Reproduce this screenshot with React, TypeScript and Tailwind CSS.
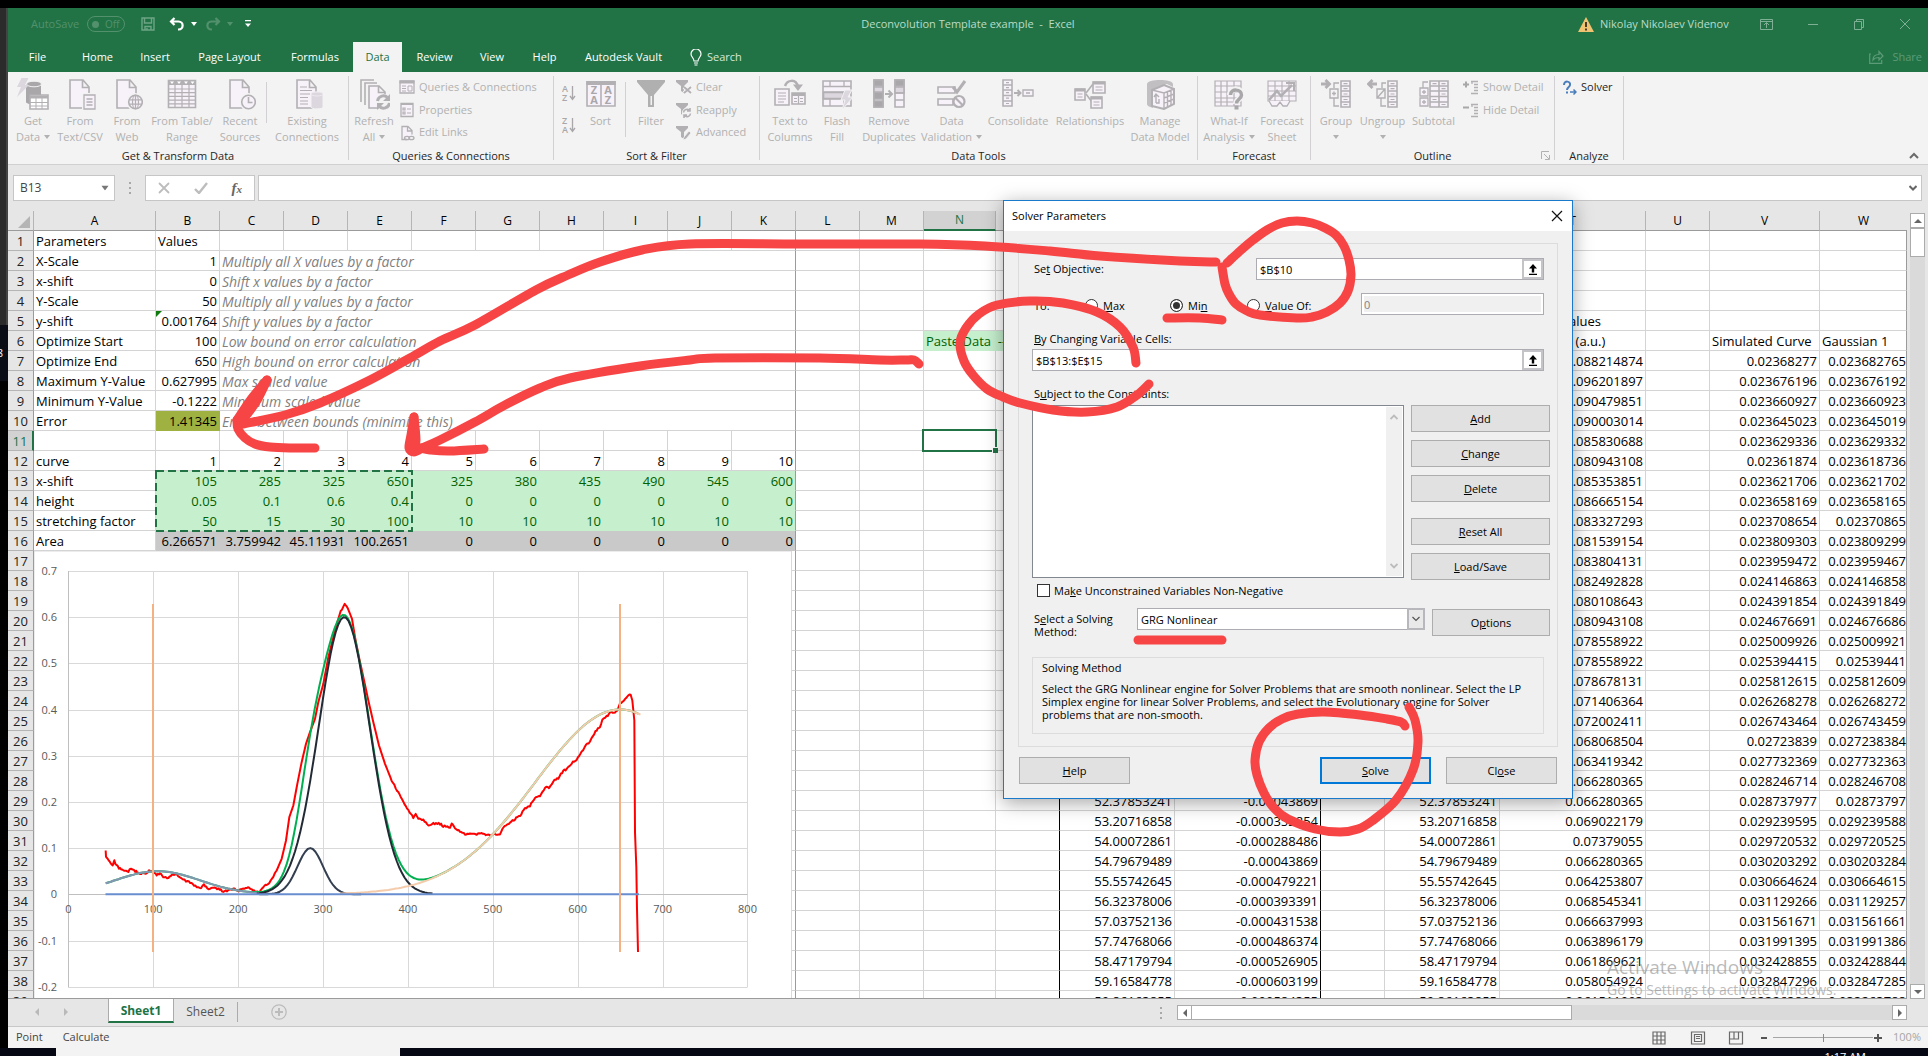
import React from "react";

type Pt = [number, number];
type Kids = { children?: React.ReactNode };

/* ---------- Ribbon icons ---------- */

const G = "#b3b0b4";
const D = "#a9a7a9";
const F = "#f7f1f9";
const P = "#dcd6de";

function Ico({ children }: Kids) {
  return (
    <svg viewBox="0 0 32 32" className="block size-8 shrink-0" fill="none" stroke={G} strokeWidth={1.6}>
      {children}
    </svg>
  );
}
const Page = () => <path d="M6 2h13l6 7v21H6zM18.500 2v7.500h6.500" fill={F} />;

const GetDataIcon = () => (
  <Ico>
    <path d="M9 6v18c0 3 15 3 15 0V6" fill={D} stroke="none" />
    <ellipse cx="17" cy="6" rx="7.500" ry="2.800" fill={D} stroke="#f3f3f3" strokeWidth={1} />
    <path d="M5 -1h7L8 7h4L0 19l4-10H0z" fill={P} stroke="none" />
    <path d="M13 17h18v14H13z" fill="#fff" />
    <path d="M13 19h18" strokeWidth={3} />
    <path d="M13 24.500h18M13 28h18M19 19v12M25 19v12" strokeWidth={1} />
  </Ico>
);
const TextCsvIcon = () => (
  <Ico>
    <Page />
    <path d="M20 17h11v14H20z" fill={F} stroke="#f3f3f3" strokeWidth={4} />
    <path d="M20 17h11v14H20zM22.500 21h6M22.500 24h6M22.500 27h6" fill={F} strokeWidth={1.300} />
  </Ico>
);
const WebIcon = () => (
  <Ico>
    <Page />
    <circle cx="24.500" cy="24" r="7" fill={F} stroke="#f3f3f3" strokeWidth={4} />
    <circle cx="24.500" cy="24" r="6.800" fill={F} />
    <ellipse cx="24.500" cy="24" rx="3" ry="6.800" strokeWidth={1.200} />
    <path d="M18 21.800h13M18 26.200h13M24.500 17v14" strokeWidth={1.200} />
  </Ico>
);
const TableIcon = () => (
  <Ico>
    <path d="M2.500 2.500h27v27h-27z" fill={F} />
    <path d="M2 4.500h28" strokeWidth={5} />
    <path d="M4 3.500h4l-2 2.500zM11 3.500h4l-2 2.500zM18 3.500h4l-2 2.500zM24.500 3.500h4l-2 2.500z" fill="#fff" stroke="none" />
    <path d="M2 11h28M2 14.700h28M2 18.400h28M2 22.100h28M2 25.800h28M9 7v23M16 7v23M23 7v23" strokeWidth={1.200} />
  </Ico>
);
const RecentIcon = () => (
  <Ico>
    <Page />
    <circle cx="24.500" cy="24" r="7" fill={F} stroke="#f3f3f3" strokeWidth={4} />
    <circle cx="24.500" cy="24" r="6.800" fill={F} />
    <path d="M24.500 19v5.500h4" />
  </Ico>
);
const ExistingIcon = () => (
  <Ico>
    <Page />
    <path d="M9 9h7M9 12.500h12M9 16h10M9 19.500h8M9 23h8M9 26h8" strokeWidth={1.200} />
    <path d="M20 16v13c0 2.500 12 2.500 12 0V16c0-2.500-12-2.500-12 0" fill={P} stroke="#f3f3f3" strokeWidth={1} />
    <ellipse cx="26" cy="16" rx="6" ry="2" fill={P} stroke="#efeaf0" strokeWidth={1} />
  </Ico>
);
const RefreshIcon = () => (
  <Ico>
    <path d="M3 24V2h13M7 27V5h12" />
    <path d="M11 8h10l6 6v16H11zM20.500 8v6.500H27" fill={F} />
    <circle cx="25.500" cy="24" r="8" fill="#f3f3f3" stroke="none" />
    <path d="M19.500 23a6 6 0 0 1 10.500-3M31.500 25a6 6 0 0 1-10.500 3" strokeWidth={3} />
    <path d="M32 16v7h-7zM19 32v-7h7z" fill={G} stroke="none" />
  </Ico>
);
const SortIcon = () => (
  <Ico>
    <path d="M2 4h28v24H2z" fill={F} />
    <path d="M1.200 5h29.600" strokeWidth={4} />
    <path d="M16 6v22" />
    <g fill={D} stroke="none" fontFamily="Open Sans" fontSize="11" fontWeight="700" textAnchor="middle">
      <text x="9" y="16">Z</text>
      <text x="9" y="26">A</text>
      <text x="23" y="16">A</text>
      <text x="23" y="26">Z</text>
    </g>
  </Ico>
);
const FilterIcon = () => (
  <Ico>
    <path d="M2 2h28v2L19 17v12h-6V17L2 4z" fill="#b1b0b1" stroke="none" />
    <path d="M15.500 18h1.500v9h-1.500z" fill="#f3f3f3" stroke="none" />
  </Ico>
);
const TextColumnsIcon = () => (
  <Ico>
    <path d="M11 8c2-6 11-8 13 1" strokeWidth={2.500} />
    <path d="M19 6.500h10L24 13z" fill={G} stroke="none" />
    <path d="M1 11h14v16H1z" fill={F} />
    <path d="M4 15h8M4 18h8M4 21h8M4 24h6" strokeWidth={1.200} />
    <path d="M18 15h13v11H18z" fill={F} />
    <path d="M18 16.500h13" strokeWidth={3} />
    <path d="M24.500 15v11M20 20.500h3M20 23.500h3M26 20.500h3M26 23.500h3" strokeWidth={1.200} />
  </Ico>
);
const FlashIcon = () => (
  <Ico>
    <path d="M2 3h28v25H2z" fill={F} />
    <path d="M2 8.500h28M2 14h28M2 21h28M9 3v6M23 3v6M9 14v14M23 14v14" strokeWidth={1.300} />
    <path d="M2.500 14.500h20v6h-20z" fill={P} />
    <path d="M24 12h7l-4 7h5L21 32l3-10h-4z" fill={P} stroke="#f3f3f3" strokeWidth={1} />
  </Ico>
);
const RemoveIcon = () => (
  <Ico>
    <path d="M1 2h9v27H1zM22 2h9v27h-9z" fill={F} />
    <path d="M1 2h9v6H1zM1 14h9v7H1zM22 2h9v6h-9zM1 23h9v6H1z" fill={D} />
    <path d="M1 9h9v5H1zM22 9h9v6h-9z" fill={P} />
    <path d="M22 15h9M22 22h9" />
    <path d="M12 16h6M15.500 12.500L19 16l-3.500 3.500" strokeWidth={2} />
  </Ico>
);
const ValidationIcon = () => (
  <Ico>
    <path d="M2 9h17v6H2zM2 21h15v6H2z" fill={F} />
    <path d="M17 9l4 5L29 3" strokeWidth={3} />
    <circle cx="23" cy="23.500" r="5.500" fill={F} strokeWidth={2.200} />
    <path d="M19 19.500l8 8" strokeWidth={2.200} />
  </Ico>
);
const ConsolidateIcon = () => (
  <Ico>
    <path d="M1 2h9v26H1zM1 7h9M1 12h9M1 17.500h9M1 23h9" fill={F} />
    <path d="M4 4.700h3M4 9.700h3M4 14.700h3M4 20.200h3M4 25.500h3" strokeWidth={1.200} />
    <path d="M12 15h6M15.500 12l3 3-3 3" strokeWidth={2} />
    <path d="M21 12h10v6H21zM24 15h4" fill={F} strokeWidth={1.400} />
  </Ico>
);
const RelationIcon = () => (
  <Ico>
    <path d="M12 15l7-9M12 16l6 8" />
    <path d="M1 11h10v11H1zM19 4h12v11H19zM17 19h11v11H17z" fill={F} />
    <path d="M1 12h10M19 5h12M17 20h11" strokeWidth={3} />
    <path d="M3.500 16h5M3.500 19h5M21.500 9h7M21.500 12h7M19.500 24h6M19.500 27h6" strokeWidth={1.200} />
  </Ico>
);
const ManageIcon = () => (
  <Ico>
    <path d="M3 6v20c0 2 3 3 6 4V11l14-5 6 3V6c0-5.500-26-5.500-26 0" fill="#c2bfc3" stroke="none" />
    <path d="M8 12l12-5 10 4v15l-10 5-12-3z" fill={F} strokeWidth={2} />
    <path d="M8 12l12 3 10-4M20 15v16M23.500 14v15M27 12.500v15M20 20l10-4M20 25l10-4M12 25v-8M10 19l2-3 3 3M12 25h3v-4" strokeWidth={1.400} />
  </Ico>
);
const WhatIfIcon = () => (
  <Ico>
    <path d="M2 3h26v25H2zM2 8h26M2 14h26M2 20h26M2 24h26M8 3v25M14 3v25M21 3v25" strokeWidth={1.200} fill={F} />
    <path d="M17 17c0-8 13-7 12 0 0 4-6 4-6 9" stroke="#f3f3f3" strokeWidth={6} />
    <path d="M17.500 17c0-7 11.500-6 11 0 0 4-5 4-5 8.500" stroke={D} strokeWidth={3.500} />
    <path d="M21.500 27.500h4v4h-4z" fill={D} stroke="none" />
  </Ico>
);
const ForecastIcon = () => (
  <Ico>
    <path d="M2 3h28v20H2zM2 8h28M2 13h28M2 18h28M9 3v20M16 3v20M23 3v20" strokeWidth={1.100} fill={F} />
    <path d="M3 23l3 5h5l3-4 3 4h4l3-5" fill={F} strokeWidth={1.300} />
    <path d="M3 22l8-9 4 5L26 7" strokeWidth={2.500} />
    <path d="M20 5h8v8" strokeWidth={2} />
  </Ico>
);
const GroupIcon = () => (
  <Ico>
    <path d="M1 6h7M5.500 2l4 4-4 4" strokeWidth={2.800} />
    <path d="M21 3h9v26h-9zM21 8h9M21 13h9M21 18.500h9M21 24h9" fill={F} />
    <path d="M23.500 5.700h4M23.500 10.700h4M23.500 16h4M23.500 21.500h4M23.500 26.500h4" strokeWidth={1.200} />
    <path d="M19 5h-5v5M14 20v8h5M10 11h8v9h-8zM12 15.500h4M14 13.500v4" strokeWidth={1.400} />
  </Ico>
);
const UngroupIcon = () => (
  <Ico>
    <path d="M10 6H2M5.500 2l-4 4 4 4" strokeWidth={2.800} />
    <path d="M21 3h9v26h-9zM21 8h9M21 13h9M21 18.500h9M21 24h9" fill={F} />
    <path d="M23.500 5.700h4M23.500 10.700h4M23.500 16h4M23.500 21.500h4M23.500 26.500h4" strokeWidth={1.200} />
    <path d="M19 5h-4v5M14 20v8h5M10 11h8v9h-8zM10 20l8-9" strokeWidth={1.400} />
  </Ico>
);
const SubtotalIcon = () => (
  <Ico>
    <path d="M12 3h18v26H12zM12 8h18M12 13h18M12 18.500h18M12 24h18M21 3v26" fill={F} />
    <path d="M14.500 5.700h4M23.500 5.700h4M23.500 10.700h4M23.500 16h4M14.500 21.500h4M23.500 26.500h4" strokeWidth={1.200} />
    <path d="M10 4H5v6M2 10h8v8H2zM4 14h4M6 12v4M2 20h8v8H2zM4 24h4M6 22v4" fill={F} strokeWidth={1.300} />
  </Ico>
);

function Small({ children, stroke = G }: Kids & { stroke?: string }) {
  return (
    <svg viewBox="0 0 16 16" className="block size-4 shrink-0" fill="none" stroke={stroke} strokeWidth={1.300}>
      {children}
    </svg>
  );
}
const QueriesIcon = () => (
  <Small>
    <path d="M1 2h14v12H1z" fill={F} />
    <path d="M0.500 3h15" strokeWidth={3} />
    <path d="M3 7h4M3 9.500h4M3 12h4M9 7h4v5H9z" strokeWidth={1} />
  </Small>
);
const PropertiesIcon = () => (
  <Small>
    <path d="M2 1.500h12v13H2z" fill={F} />
    <path d="M2 2h12" strokeWidth={2} />
    <path d="M4 6h2v2H4zM4 10h2v2H4zM8 7h4M8 11h4" strokeWidth={1.200} />
  </Small>
);
const LinksIcon = () => (
  <Small>
    <path d="M8 14.500H3v-13h6l4 4v4M8.500 1.500V6H13" fill={F} />
    <ellipse cx="8" cy="13" rx="2.500" ry="1.700" />
    <ellipse cx="12.500" cy="13" rx="2.500" ry="1.700" />
  </Small>
);
const MiniFunnel = () => <path d="M0 1h12v2L8 7v7l-3-2V7L0 3z" fill={G} stroke="none" />;
const ClearIcon = () => (
  <Small>
    <MiniFunnel />
    <path d="M8 8l7 6M15 8l-7 6" stroke="#f3f3f3" strokeWidth={4} />
    <path d="M8 8l7 6M15 8l-7 6" strokeWidth={1.800} />
  </Small>
);
const ReapplyIcon = () => (
  <Small>
    <MiniFunnel />
    <circle cx="11" cy="11" r="4.500" fill="#f3f3f3" stroke="#f3f3f3" />
    <path d="M7.500 10.500a3.500 3.500 0 0 1 6-2M14.500 11.500a3.500 3.500 0 0 1-6 2M14 6v3h-3M8 16v-3h3" strokeWidth={1.600} />
  </Small>
);
const AdvancedIcon = () => (
  <Small>
    <MiniFunnel />
    <path d="M7 15l1-3 5-6 2 2-5 6z" fill={G} stroke="#f3f3f3" strokeWidth={0.800} />
  </Small>
);
function DetailIcon({ plus }: { plus: boolean }) {
  return (
    <Small>
      <path d={plus ? "M0 4.500h6M3 1.500v6" : "M0 4.500h6"} strokeWidth={2} stroke={D} />
      <path d="M8 1.500h7M11 4.500h4M11 7.500h4M11 10.500h4M8 13.500h7M9 2v2" strokeWidth={1.300} />
    </Small>
  );
}
function AZIcon({ a, b }: { a: string; b: string }) {
  return (
    <svg viewBox="0 0 14 18" className="block h-[18px] w-[14px]" fill="none" stroke={D} strokeWidth={1.300}>
      <g fill={D} stroke="none" fontFamily="Open Sans" fontSize="9" fontWeight="600">
        <text x="0" y="8">{a}</text>
        <text x="0" y="17">{b}</text>
      </g>
      <path d="M10.500 2v13M8 12l2.500 3.500L13 12" />
    </svg>
  );
}

/* ---------- Ribbon ---------- */

const Caret = ({ cls = "text-[#b1b1b1]" }: { cls?: string }) => (
  <svg viewBox="0 0 6 4" className={`inline-block h-[4px] w-[6px] align-middle ${cls}`}>
    <path d="M0 0h6L3 4z" fill="currentColor" />
  </svg>
);

function Big({ w, icon, l1, l2, caret }: { w: string; icon: React.ReactNode; l1: string; l2?: string; caret?: boolean }) {
  return (
    <button type="button" className={`flex shrink-0 flex-col items-center text-[11px] leading-4 whitespace-nowrap text-[#b1b1b1] ${w}`}>
      {icon}
      <span className="mt-[3px]">{l1}</span>
      <span className="flex h-4 items-center gap-1">
        {l2}
        {caret && <Caret />}
      </span>
    </button>
  );
}
function Line({ icon, text, dark }: { icon: React.ReactNode; text: string; dark?: boolean }) {
  return (
    <button type="button" className={`flex h-[23px] items-center gap-1 text-[11px] whitespace-nowrap ${dark ? "text-[#262626]" : "text-[#b1b1b1]"}`}>
      {icon}
      {text}
    </button>
  );
}
function Group({ w, label, children, extra }: Kids & { w: string; label: string; extra?: React.ReactNode }) {
  return (
    <section className={`flex shrink-0 flex-col ${w}`}>
      <div className="flex flex-1">
        <div className="flex min-w-0 flex-1 flex-col">
          <div className="flex h-[72px] pt-[6px]">{children}</div>
          <div className="relative mt-[4px] h-[16px] text-center text-[11px] leading-4 text-[#262626]">
            {label}
            {extra}
          </div>
        </div>
        <div className="mt-1 mb-1 w-px bg-[#d2d0d2]" />
      </div>
    </section>
  );
}
const Sep = ({ h = "h-[41px]" }: { h?: string }) => <div className={`mt-1 w-px shrink-0 bg-[#d2d0d2] ${h}`} />;

function Ribbon() {
  return (
    <div className="flex h-[93px] overflow-hidden border-b border-[#d0d0d0] bg-[#f3f3f3]">
      <Group w="w-[341px]" label="Get & Transform Data">
        <Big w="ml-[2px] w-[46px]" icon={<GetDataIcon />} l1="Get" l2="Data" caret />
        <Big w="w-[48px]" icon={<TextCsvIcon />} l1="From" l2="Text/CSV" />
        <Big w="w-[46px]" icon={<WebIcon />} l1="From" l2="Web" />
        <Big w="w-[64px]" icon={<TableIcon />} l1="From Table/" l2="Range" />
        <Big w="w-[52px]" icon={<RecentIcon />} l1="Recent" l2="Sources" />
        <Sep />
        <Big w="w-[80px]" icon={<ExistingIcon />} l1="Existing" l2="Connections" />
      </Group>
      <Group w="w-[205px]" label="Queries & Connections">
        <Big w="w-[50px]" icon={<RefreshIcon />} l1="Refresh" l2="All" caret />
        <div className="-mt-[2px] flex flex-col">
          <Line icon={<QueriesIcon />} text="Queries & Connections" />
          <Line icon={<PropertiesIcon />} text="Properties" />
          <Line icon={<LinksIcon />} text="Edit Links" />
        </div>
      </Group>
      <Group w="w-[206px]" label="Sort & Filter">
        <div className="mt-[6px] ml-2 flex w-[14px] flex-col gap-[14px]">
          <AZIcon a="A" b="Z" />
          <AZIcon a="Z" b="A" />
        </div>
        <Big w="w-[49px]" icon={<SortIcon />} l1="Sort" />
        <Sep h="h-[55px]" />
        <Big w="w-[50px]" icon={<FilterIcon />} l1="Filter" />
        <div className="-mt-[2px] flex flex-col">
          <Line icon={<ClearIcon />} text="Clear" />
          <Line icon={<ReapplyIcon />} text="Reapply" />
          <Line icon={<AdvancedIcon />} text="Advanced" />
        </div>
      </Group>
      <Group w="w-[438px]" label="Data Tools">
        <Big w="ml-[3px] w-[54px]" icon={<TextColumnsIcon />} l1="Text to" l2="Columns" />
        <Big w="w-[40px]" icon={<FlashIcon />} l1="Flash" l2="Fill" />
        <Big w="w-[64px]" icon={<RemoveIcon />} l1="Remove" l2="Duplicates" />
        <Big w="w-[61px]" icon={<ValidationIcon />} l1="Data" l2="Validation" caret />
        <Big w="w-[72px]" icon={<ConsolidateIcon />} l1="Consolidate" />
        <Big w="w-[72px]" icon={<RelationIcon />} l1="Relationships" />
        <Big w="w-[68px]" icon={<ManageIcon />} l1="Manage" l2="Data Model" />
      </Group>
      <Group w="w-[113px]" label="Forecast">
        <Big w="ml-[4px] w-[54px]" icon={<WhatIfIcon />} l1="What-If" l2="Analysis" caret />
        <Big w="w-[52px]" icon={<ForecastIcon />} l1="Forecast" l2="Sheet" />
      </Group>
      <Group
        w="w-[244px]"
        label="Outline"
        extra={
          <svg viewBox="0 0 9 9" className="absolute right-1 bottom-1 size-[9px]" fill="none" stroke="#b1b1b1">
            <path d="M.5 8V.500H8M3 3l5 5M8.500 4v4.500H4" />
          </svg>
        }
      >
        <Big w="ml-[2px] w-[46px]" icon={<GroupIcon />} l1="Group" caret />
        <Big w="w-[47px]" icon={<UngroupIcon />} l1="Ungroup" caret />
        <Big w="w-[55px]" icon={<SubtotalIcon />} l1="Subtotal" />
        <div className="-mt-[2px] ml-[2px] flex flex-col">
          <Line icon={<DetailIcon plus />} text="Show Detail" />
          <Line icon={<DetailIcon plus={false} />} text="Hide Detail" />
        </div>
      </Group>
      <Group w="w-[69px]" label="Analyze">
        <div className="-mt-[2px] ml-[6px]">
          <Line
            dark
            icon={
              <Small stroke="#4a7ebb">
                <path d="M3 5c0-5 7-4 6 0 0 2-3 2-3 5M6 11.500v2" strokeWidth={2} />
                <path d="M9 12h6M12.500 9.500L15 12l-2.500 2.500" strokeWidth={1.500} />
              </Small>
            }
            text="Solver"
          />
        </div>
      </Group>
      <button type="button" aria-label="Collapse ribbon" className="mt-auto mr-[9px] mb-1 ml-auto text-[#6a6a6a]">
        <svg viewBox="0 0 10 8" className="h-2 w-[10px]" fill="none" stroke="currentColor" strokeWidth={2}>
          <path d="M1 6l4-4 4 4" />
        </svg>
      </button>
    </div>
  );
}

/* ---------- Title bar and tabs ---------- */

function TitleBar() {
  return (
    <header className="relative flex h-[32px] items-center text-[11px] text-[#b9dcc8]">
      <span className="ml-[23px] text-[#53916d]">AutoSave</span>
      <button type="button" className="ml-[8px] flex h-4 w-[38px] items-center gap-[6px] rounded-full border border-[#53916d] pl-1 text-[10px] leading-none text-[#53916d]">
        <span className="size-[7px] rounded-full bg-[#53916d]" />
        Off
      </button>
      <button type="button" aria-label="Save" className="ml-[16px]">
        <svg viewBox="0 0 14 14" className="size-[14px]" fill="none" stroke="#6da585" strokeWidth={1.400}>
          <path d="M1 1h12v12H1zM3.500 1v5h7V1M4 13V9.500h6V13M6 11v2" />
        </svg>
      </button>
      <button type="button" aria-label="Undo" className="ml-[14px] flex items-center gap-[6px] text-white">
        <svg viewBox="0 0 16 14" className="h-[14px] w-4" fill="none" stroke="currentColor" strokeWidth={2.200}>
          <path d="M5.500 1L2 4.500 5.500 8M2 4.500h7.500c5.500 0 5.500 8 0 8H9" />
        </svg>
        <Caret cls="text-white" />
      </button>
      <button type="button" aria-label="Redo" className="ml-[8px] flex items-center gap-[6px] text-[#53916d]">
        <svg viewBox="0 0 16 14" className="h-[14px] w-4" fill="none" stroke="currentColor" strokeWidth={2.200}>
          <path d="M10.500 1L14 4.500 10.500 8M14 4.500H6.500c-5.500 0-5.500 8 0 8H7" />
        </svg>
        <Caret cls="text-[#53916d]" />
      </button>
      <button type="button" aria-label="Customize" className="ml-[12px]">
        <svg viewBox="0 0 6 8" className="h-2 w-[6px]" fill="#fff">
          <path d="M0 0h6v1.300H0zM0 3.500h6L3 7z" />
        </svg>
      </button>
      <h1 className="absolute inset-x-0 text-center whitespace-pre">Deconvolution Template example  -  Excel</h1>
      <div className="ml-auto flex items-center">
        <svg viewBox="0 0 16 15" className="mr-[6px] h-[15px] w-4">
          <path d="M8 0l8 15H0z" fill="#f0c373" />
          <path d="M7 5h2v5H7zM7 11.500h2v2H7z" fill="#4b3a2a" />
        </svg>
        <span className="w-[134px] whitespace-nowrap">Nikolay Nikolaev Videnov</span>
        <svg viewBox="0 0 174 14" className="ml-[20px] h-[14px] w-[174px]" fill="none" stroke="#7fb096">
          <path d="M6.500 2.500h12v10h-12zM6.500 4.500h12M12.500 11V6M10 8l2.500-2.500L15 8M54 7.500h10M100.500 4.500h7v8h-7zM102.500 4.500v-2h7v8h-2M146 2l10 10M156 2l-10 10" />
        </svg>
      </div>
    </header>
  );
}

const TABS: [string, string][] = [
  ["File", "w-[59px]"],
  ["Home", "w-[61px]"],
  ["Insert", "w-[54px]"],
  ["Page Layout", "w-[95px]"],
  ["Formulas", "w-[76px]"],
  ["Data", "w-[49px]"],
  ["Review", "w-[65px]"],
  ["View", "w-[50px]"],
  ["Help", "w-[55px]"],
  ["Autodesk Vault", "w-[103px]"],
];

function Tabs() {
  return (
    <nav className="flex h-[32px] items-end text-[11px] text-white">
      {TABS.map(([t, w]) => (
        <button
          key={t}
          type="button"
          className={`h-[30px] shrink-0 text-center font-medium whitespace-nowrap ${w} ${t === "Data" ? "bg-[#f3f3f3] text-[#217346]" : ""}`}
        >
          {t}
        </button>
      ))}
      <button type="button" className="ml-[15px] flex h-[30px] items-center gap-[5px] text-[11px] text-[#d3e9dc]">
        <svg viewBox="0 0 12 17" className="h-[17px] w-3" fill="none" stroke="#fff" strokeWidth={1.200}>
          <path d="M4 12c0-3-3-4-3-7a5 5 0 0 1 10 0c0 3-3 4-3 7zM4 14h4M4.500 16h3" />
        </svg>
        Search
      </button>
      <button type="button" className="mr-[6px] ml-auto flex h-[30px] items-center gap-2 text-[#5d9a77]">
        <svg viewBox="0 0 15 14" className="h-[14px] w-[15px]" fill="none" stroke="currentColor" strokeWidth={1.200}>
          <path d="M2 4H.7v9.300h12V10M4 10c0-4 3-5.500 6-5.500V1.500L14 6l-4 4V7.500c-3 0-5 1-6 2.500z" />
        </svg>
        Share
      </button>
    </nav>
  );
}

function FormulaBar() {
  return (
    <div className="flex h-[46px] items-start bg-[#e6e6e6] pt-[10px] pr-[6px] pl-[5px]">
      <div className="flex h-[26px] w-[102px] items-center border border-[#c6c6c6] bg-white">
        <input aria-label="Name box" defaultValue="B13" className="w-full min-w-0 pl-[6px] text-[12px] text-[#444] outline-none" />
        <Caret cls="mr-[6px] text-[#777] shrink-0 scale-125" />
      </div>
      <div className="mx-[13px] flex h-[26px] w-1 flex-col items-center justify-center gap-[3px]">
        <i className="size-[2px] bg-[#a8a8a8]" />
        <i className="size-[2px] bg-[#a8a8a8]" />
        <i className="size-[2px] bg-[#a8a8a8]" />
      </div>
      <div className="flex h-[26px] w-[110px] items-center justify-around border border-[#c6c6c6] bg-white">
        <button type="button" aria-label="Cancel">
          <svg viewBox="0 0 12 12" className="size-3" stroke="#bdbdbd" strokeWidth={1.800}>
            <path d="M1 1l10 10M11 1L1 11" />
          </svg>
        </button>
        <button type="button" aria-label="Enter">
          <svg viewBox="0 0 14 12" className="h-3 w-[14px]" fill="none" stroke="#bdbdbd" strokeWidth={2.400}>
            <path d="M1 7l4 4 8-10" />
          </svg>
        </button>
        <button type="button" className="font-['Liberation_Serif',serif] text-[15px] leading-none font-bold text-[#666] italic">
          f<span className="text-[11px]">x</span>
        </button>
      </div>
      <div className="ml-[3px] flex h-[26px] flex-1 items-center border border-[#c6c6c6] bg-white">
        <input aria-label="Formula bar" className="h-full min-w-0 flex-1 outline-none" />
        <svg viewBox="0 0 8 6" className="mr-1 h-[6px] w-2" fill="none" stroke="#666" strokeWidth={2}>
          <path d="M.5 1L4 4.500 7.500 1" />
        </svg>
      </div>
    </div>
  );
}

/* ---------- Sheet ---------- */

const COLS = "ABCDEFGHIJKLMNOPQRSTUVW".split("");
const COLW = [
  "w-[122px]", "w-[64px]", "w-[64px]", "w-[64px]", "w-[64px]", "w-[64px]", "w-[64px]", "w-[64px]", "w-[64px]", "w-[64px]", "w-[64px]", "w-[64px]", "w-[64px]",
  "w-[72px]", "w-[64px]", "w-[115px]", "w-[146px]", "w-[64px]", "w-[115px]", "w-[146px]", "w-[64px]", "w-[110px]", "",
];

const LABELS = ["Parameters", "X-Scale", "x-shift", "Y-Scale", "y-shift", "Optimize Start", "Optimize End", "Maximum Y-Value", "Minimum Y-Value", "Error", "", "curve", "x-shift", "height", "stretching factor", "Area"];
const VALUES = ["Values", "1", "0", "50", "0.001764", "100", "650", "0.627995", "-0.1222", "1.41345"];
const NOTES = [
  "", "Multiply all X values by a factor", "Shift x values by a factor", "Multiply all y values by a factor", "Shift y values by a factor", "Low bound on error calculation",
  "High bound on error calculation", "Max scaled value", "Minimum scaled value", "Error between bounds (minimize this)",
];
const CURVES: Record<number, string[]> = {
  12: ["1", "2", "3", "4", "5", "6", "7", "8", "9", "10"],
  13: ["105", "285", "325", "650", "325", "380", "435", "490", "545", "600"],
  14: ["0.05", "0.1", "0.6", "0.4", "0", "0", "0", "0", "0", "0"],
  15: ["50", "15", "30", "100", "10", "10", "10", "10", "10", "10"],
  16: ["6.266571", "3.759942", "45.11931", "100.2651", "0", "0", "0", "0", "0", "0"],
};
const T = [
  "0.088214874", "0.096201897", "0.090479851", "0.090003014", "0.085830688", "0.080943108", "0.085353851", "0.086665154", "0.083327293", "0.081539154", "0.083804131",
  "0.082492828", "0.080108643", "0.080943108", "0.078558922", "0.078558922", "0.078678131", "0.071406364", "0.072002411", "0.068068504", "0.063419342", "0.066280365",
  "0.066280365", "0.069022179", "0.07379055", "0.066280365", "0.064253807", "0.068545341", "0.066637993", "0.063896179", "0.061869621", "0.058054924", "0.061511993",
];
const V = [
  "0.02368277", "0.023676196", "0.023660927", "0.023645023", "0.023629336", "0.02361874", "0.023621706", "0.023658169", "0.023708654", "0.023809303", "0.023959472",
  "0.024146863", "0.024391854", "0.024676691", "0.025009926", "0.025394415", "0.025812615", "0.026268278", "0.026743464", "0.02723839", "0.027732369", "0.028246714",
  "0.028737977", "0.029239595", "0.029720532", "0.030203292", "0.030664624", "0.031129266", "0.031561671", "0.031991395", "0.032428855", "0.032847296", "0.033263899",
];
const W = [
  "0.023682765", "0.023676192", "0.023660923", "0.023645019", "0.023629332", "0.023618736", "0.023621702", "0.023658165", "0.02370865", "0.023809299", "0.023959467",
  "0.024146858", "0.024391849", "0.024676686", "0.025009921", "0.02539441", "0.025812609", "0.026268272", "0.026743459", "0.027238384", "0.027732363", "0.028246708",
  "0.02873797", "0.029239588", "0.029720525", "0.030203284", "0.030664615", "0.031129257", "0.031561661", "0.031991386", "0.032428844", "0.032847285", "0.033263788",
];
const X29 = ["52.37853241", "53.20716858", "54.00072861", "54.79679489", "55.55742645", "56.32378006", "57.03752136", "57.74768066", "58.47179794", "59.16584778", "59.86163855"];
const Y29 = ["-0.00043869", "-0.000352854", "-0.000288486", "-0.00043869", "-0.000479221", "-0.000393391", "-0.000431538", "-0.000486374", "-0.000526905", "-0.000603199", "-0.000584355"];

function cellText(r: number, c: string): string {
  const i = r - 7;
  if (c === "A") return LABELS[r - 1] ?? "";
  if (c === "B" && r <= 10) return VALUES[r - 1];
  if (r >= 12 && r <= 16) {
    const k = "BCDEFGHIJK".indexOf(c);
    if (k >= 0) return CURVES[r][k];
  }
  if (r === 5 && c === "T") return "Scaled Values";
  if (r === 6) {
    if (c === "T") return "Absorbance (a.u.)";
    if (c === "V") return "Simulated Curve";
    if (c === "W") return "Gaussian 1";
  }
  if (i >= 0) {
    if (c === "T") return T[i] ?? "";
    if (c === "V") return V[i] ?? "";
    if (c === "W") return W[i] ?? "";
  }
  if (r >= 29 && (c === "P" || c === "S")) return X29[r - 29] ?? "";
  if (r >= 29 && c === "Q") return Y29[r - 29] ?? "";
  return "";
}

function cellClass(r: number, c: string): string {
  const k = "BCDEFGHIJK".indexOf(c);
  const out: string[] = [];
  const left = c === "A" || r === 1 || (r === 6 && (c === "V" || c === "W"));
  if (c === "T" && (r === 5 || r === 6)) out.push("text-right pr-[44px]");
  else out.push(left ? "text-left pl-[2px]" : c === "W" ? "text-right pr-0" : "text-right pr-[2px]");
  if (k >= 0 && r >= 13 && r <= 15) out.push("bg-[#c6efce] text-[#006100] border-[#c6efce]");
  else if (k >= 0 && r === 16) out.push("bg-[#c9c9c9] border-[#c9c9c9]");
  else if (c === "B" && r === 10) out.push("bg-[#9fb141] border-[#9fb141]");
  else out.push("border-[#d4d4d4]");
  if (c === "K") out.push("border-r-[#9b9b9b]");
  if (c === "O" || c === "Q") out.push("border-r-black");
  if (c === "W") out.push("border-r-[#9b9b9b]");
  return out.join(" ");
}

const TD = "relative h-[20px] overflow-visible border-r border-b p-0 pt-[2px] leading-[17px] whitespace-nowrap";

function Row({ r }: { r: number }) {
  const cells: React.ReactNode[] = [];
  for (let n = 0; n < COLS.length; n++) {
    const c = COLS[n];
    if (c === "C" && r >= 2 && r <= 10) {
      cells.push(
        <td key={c} colSpan={9} className={`${TD} border-[#d4d4d4] border-r-[#9b9b9b] pl-[2px] text-left text-[14px] text-[#7f7f7f] italic`}>
          {NOTES[r - 1]}
        </td>,
      );
      n += 8;
      continue;
    }
    if (c === "N" && r === 6) {
      cells.push(
        <td key={c} colSpan={2} className={`${TD} border-[#c6efce] border-r-black bg-[#c6efce] pl-[2px] text-left whitespace-pre text-[#006100]`}>
          {"Paste Data  -->"}
        </td>,
      );
      n += 1;
      continue;
    }
    cells.push(
      <td key={c} className={`${TD} ${cellClass(r, c)}`}>
        {cellText(r, c)}
        {c === "B" && r === 5 && <span className="absolute top-0 left-0 border-t-[6px] border-r-[6px] border-t-[#0f7b0f] border-r-transparent" />}
        {c === "B" && r === 13 && (
          <svg className="pointer-events-none absolute -top-px -left-px z-10 h-[62px] w-[258px]" fill="none">
            <rect x="1" y="1" width="256" height="60" stroke="#217346" strokeWidth="2" strokeDasharray="8 4" />
          </svg>
        )}
        {c === "N" && r === 11 && (
          <span className="absolute -top-[2px] -right-[2px] -bottom-[2px] -left-[2px] z-10 border-2 border-[#217346]">
            <i className="absolute -right-[3px] -bottom-[3px] size-[6px] border-t border-l border-white bg-[#217346]" />
          </span>
        )}
      </td>,
    );
  }
  return (
    <tr>
      <th className={`h-[20px] border-b border-[#b5b5b5] p-0 pt-[2px] text-center leading-[17px] font-normal ${r === 11 ? "border-r-2 border-r-[#217346] bg-[#d2d2d2] text-[#217346]" : "border-r border-r-[#9b9b9b] bg-[#e6e6e6] text-[#222]"}`}>{r}</th>
      {cells}
    </tr>
  );
}

/* ---------- Chart ---------- */

const TRACE: Pt[] = [
  [317, 930], [318, 950], [325, 955], [332, 968], [338, 972], [343, 962], [350, 975], [360, 985], [370, 992], [378, 988], [385, 993], [393, 984], [402, 990], [412, 995], [420, 1003], [428, 995],
  [437, 998], [447, 992], [460, 995], [470, 1003], [480, 998], [490, 1010], [505, 1012], [515, 1003], [530, 1003], [545, 1015], [558, 1022], [575, 1027], [590, 1040], [603, 1042], [612, 1033],
  [622, 1045], [640, 1042], [655, 1045], [670, 1053], [685, 1050], [700, 1045], [712, 1052], [725, 1045], [740, 1040], [755, 1047], [765, 1050], [778, 1055], [790, 1038], [800, 1032], [812, 1022],
  [820, 1010], [830, 990], [845, 955], [858, 900], [868, 830], [880, 795], [892, 730], [905, 665], [918, 610], [930, 575], [945, 535], [955, 485], [970, 430], [985, 350], [1000, 290], [1012, 245],
  [1022, 212], [1034, 192], [1044, 205], [1056, 235], [1065, 290], [1078, 355], [1090, 410], [1105, 480], [1120, 545], [1137, 615], [1155, 670], [1175, 720], [1195, 757], [1210, 785], [1225, 808],
  [1240, 832], [1247, 820], [1255, 832], [1270, 838], [1285, 852], [1300, 850], [1320, 850], [1330, 857], [1350, 862], [1355, 850], [1365, 862], [1380, 872], [1395, 882], [1410, 882], [1430, 880],
  [1445, 875], [1462, 885], [1480, 882], [1500, 880], [1515, 855], [1530, 848], [1545, 835], [1560, 825], [1575, 805], [1590, 795], [1605, 770], [1620, 765], [1635, 742], [1647, 740], [1660, 722],
  [1675, 712], [1690, 690], [1700, 688], [1715, 668], [1730, 658], [1745, 635], [1758, 615], [1770, 603], [1775, 590], [1790, 568], [1800, 560], [1807, 540], [1820, 528], [1830, 515], [1845, 518],
  [1852, 510], [1860, 488], [1875, 478], [1885, 467], [1892, 463], [1897, 480], [1903, 540], [1905, 875], [1909, 980], [1911, 1105], [1914, 1235],
];

const PX = (x: number) => 34.3 + 0.849 * x;
const PY = (v: number) => 343.3 - 462 * v;

function noisyTrace(): string {
  const out: string[] = [];
  let seed = 7;
  for (let i = 0; i < TRACE.length - 1; i++) {
    const [x0, y0] = TRACE[i];
    const [x1, y1] = TRACE[i + 1];
    const n = Math.max(1, Math.round((x1 - x0) / 4));
    const steep = Math.abs(y1 - y0) > 2 * (x1 - x0);
    for (let k = 0; k < n; k++) {
      seed = (seed * 1103515245 + 12345) % 2147483648;
      const j = steep ? 0 : (seed / 2147483648 - 0.5) * 6;
      out.push(`${(x0 + ((x1 - x0) * k) / n) / 3 - 34},${(y0 + ((y1 - y0) * k) / n + j) / 3 - 10.500}`);
    }
  }
  out.push("604,401");
  return out.join(" ");
}
const gauss = (x: number, m: number, h: number, s: number) => h * Math.exp(-((x - m) ** 2) / (2 * s * s));
function curve(f: (x: number) => number, a: number, b: number): string {
  const out: string[] = [];
  for (let x = a; x <= b; x += 3) out.push(`${PX(x).toFixed(1)},${PY(f(x)).toFixed(1)}`);
  return out.join(" ");
}
const g1 = (x: number) => gauss(x, 105, 0.05, 50);
const g2 = (x: number) => gauss(x, 285, 0.1, 15);
const g3 = (x: number) => gauss(x, 325, 0.6, 30);
const g4 = (x: number) => gauss(x, 650, 0.4, 100);

function Chart() {
  return (
    <svg viewBox="0 0 758 448" className="absolute top-[340px] left-[26px] h-[448px] w-[758px]" fill="none">
      <rect x="0" y="0" width="757.500" height="460" fill="#fff" stroke="#d9d9d9" />
      <g stroke="#d9d9d9">
        {[0.7, 0.6, 0.5, 0.4, 0.3, 0.2, 0.1, -0.1, -0.2].map((v) => (
          <path key={v} d={`M34 ${Math.round(PY(v)) + 0.5}H713.500`} />
        ))}
        {[100, 200, 300, 400, 500, 600, 700, 800].map((x) => (
          <path key={x} d={`M${Math.round(PX(x)) + 0.5} 20V436`} />
        ))}
      </g>
      <path d="M34.500 20V436M34 343.500H713.500" stroke="#bfbfbf" />
      <g fontFamily="Open Sans" fontSize="11" fill="#595959">
        {["0.7", "0.6", "0.5", "0.4", "0.3", "0.2", "0.1", "0", "-0.1", "-0.2"].map((s) => (
          <text key={s} x="23" y={PY(Number(s)) + 4} textAnchor="end">
            {s}
          </text>
        ))}
        {[0, 100, 200, 300, 400, 500, 600, 700, 800].map((x) => (
          <text key={x} x={PX(x)} y="362" textAnchor="middle">
            {x}
          </text>
        ))}
      </g>
      <g strokeWidth="2" strokeLinejoin="round">
        <polyline points={noisyTrace()} stroke="#ff0000" />
        <polyline points={curve((x) => g1(x) + g2(x) + g3(x) + g4(x), 44, 672)} stroke="#00b050" />
        <polyline points={curve(g1, 44, 250)} stroke="#8497b0" />
        <polyline points={curve(g2, 225, 345)} stroke="#333f50" />
        <polyline points={curve(g3, 222, 430)} stroke="#222a35" />
        <polyline points={curve(g4, 320, 674)} stroke="#f4cbab" />
        <path d="M71.500 343.300H605" stroke="#698ed0" />
        <path d="M119 53V401M586 53V401" stroke="#f4b183" />
      </g>
    </svg>
  );
}

const ArrowBtn = ({ d, cls, label }: { d: string; cls: string; label: string }) => (
  <button type="button" aria-label={label} className={`flex shrink-0 items-center justify-center border border-[#ababab] bg-white ${cls}`}>
    <svg viewBox="0 0 8 8" className="size-2" fill="#666">
      <path d={d} />
    </svg>
  </button>
);

function Sheet() {
  return (
    <div className="flex min-h-0 flex-1 bg-[#e6e6e6]">
      <div className="relative min-w-0 flex-1 overflow-hidden border-b border-[#9b9b9b]">
        <table className="w-full table-fixed border-separate border-spacing-0 bg-white text-[13px] text-black">
          <colgroup>
            <col className="w-[26px]" />
            {COLS.map((c, i) => (
              <col key={c} className={COLW[i]} />
            ))}
          </colgroup>
          <thead>
            <tr className="text-[12px]">
              <th className="h-[20px] border-r border-b border-[#b5b5b5] border-b-[#9b9b9b] bg-[#e6e6e6] p-0">
                <svg viewBox="0 0 12 12" className="mt-[2px] ml-[10px] size-3">
                  <path d="M12 0v12H0z" fill="#b5b5b5" />
                </svg>
              </th>
              {COLS.map((c) => (
                <th
                  key={c}
                  className={`h-[20px] p-0 text-center leading-[18px] font-normal ${c === "N" ? "border-r border-b-2 border-r-[#b5b5b5] border-b-[#217346] bg-[#d2d2d2] text-[#217346]" : c === "W" ? "border-b border-b-[#9b9b9b] bg-[#e6e6e6]" : "border-r border-b border-r-[#b5b5b5] border-b-[#9b9b9b] bg-[#e6e6e6]"}`}
                >
                  {c}
                </th>
              ))}
            </tr>
          </thead>
          <tbody>
            {Array.from({ length: 39 }, (_, i) => (
              <Row key={i} r={i + 1} />
            ))}
          </tbody>
        </table>
        <Chart />
      </div>
      <div className="flex w-[21px] flex-col pt-[2px] pr-[3px] pl-[3px]">
        <div className="flex flex-1 flex-col bg-[#dadada]">
          <ArrowBtn label="Scroll up" cls="h-[15px] w-[15px]" d="M0 6h8L4 2z" />
          <div className="h-[29px] border border-[#ababab] bg-white" />
          <div className="flex-1" />
          <ArrowBtn label="Scroll down" cls="h-[15px] w-[15px]" d="M0 2h8L4 6z" />
        </div>
      </div>
    </div>
  );
}

function SheetTabs() {
  return (
    <div className="flex h-[27px] items-start bg-[#e6e6e6] text-[12px]">
      <svg viewBox="0 0 100 26" className="h-[26px] w-[100px] shrink-0" fill="#b9b9b9">
        <path d="M31 9v8l-4-4zM56 9v8l4-4z" />
      </svg>
      <button type="button" className="-mt-px h-[25px] w-[66px] shrink-0 border-x border-b-2 border-x-[#ababab] border-b-[#217346] bg-white pt-[2px] font-bold text-[#217346]">
        Sheet1
      </button>
      <button type="button" className="mt-[3px] h-[20px] w-[64px] shrink-0 border-r border-[#ababab] text-[#555]">
        Sheet2
      </button>
      <button type="button" aria-label="New sheet" className="mt-[5px] ml-[33px]">
        <svg viewBox="0 0 16 16" className="size-4" fill="none" stroke="#bcbcbc" strokeWidth={1.300}>
          <circle cx="8" cy="8" r="7.200" />
          <path d="M8 4v8M4 8h8" strokeWidth={2} />
        </svg>
      </button>
      <div className="mt-2 ml-auto flex flex-col gap-[3px]">
        <i className="size-[2px] bg-[#a8a8a8]" />
        <i className="size-[2px] bg-[#a8a8a8]" />
        <i className="size-[2px] bg-[#a8a8a8]" />
      </div>
      <div className="mt-[6px] mr-[21px] ml-[15px] flex h-[15px] w-[730px] bg-[#dadada]">
        <ArrowBtn label="Scroll left" cls="w-[15px]" d="M6 0v8L2 4z" />
        <div className="w-[380px] border border-l-0 border-[#ababab] bg-white" />
        <ArrowBtn label="Scroll right" cls="ml-auto w-[15px]" d="M2 0v8l4-4z" />
      </div>
    </div>
  );
}

function StatusBar() {
  return (
    <footer className="flex h-[22px] items-center border-t border-[#c8c8c8] bg-[#f3f3f3] text-[11px] text-[#444]">
      <span className="ml-2">Point</span>
      <span className="ml-5">Calculate</span>
      <svg viewBox="0 0 92 14" className="ml-auto h-[14px] w-[92px]" fill="none" stroke="#6a6a6a" strokeWidth={1.200}>
        <path d="M1 1h12v12H1zM1 5h12M1 9h12M5 1v12M9 1v12M39.500 1h13v12h-13zM42.500 3.500h7v7h-7zM44 5.500h4M44 7.500h4M77.500 1h13v12h-13zM77.500 8h9V1M82 1v7" />
      </svg>
      <span className="ml-[17px] h-[2px] w-[6px] bg-[#555]" />
      <div className="relative ml-[6px] flex w-[100px] items-center">
        <input aria-label="Zoom" type="range" defaultValue={50} className="h-px w-full appearance-none bg-[#a6a6a6] [&::-webkit-slider-thumb]:h-[8px] [&::-webkit-slider-thumb]:w-px [&::-webkit-slider-thumb]:appearance-none [&::-webkit-slider-thumb]:bg-[#8a8a8a]" />
      </div>
      <svg viewBox="0 0 8 8" className="ml-px size-2" stroke="#555" strokeWidth={2}>
        <path d="M4 0v8M0 4h8" />
      </svg>
      <span className="mr-[7px] ml-[11px] text-[#a6a6a6]">100%</span>
    </footer>
  );
}

/* ---------- Solver dialog ---------- */

const U = ({ children }: Kids) => <span className="underline underline-offset-1">{children}</span>;

function Btn({ children, cls }: Kids & { cls: string }) {
  return (
    <button type="button" className={`h-[27px] bg-[#e1e1e1] text-center ${cls}`}>
      {children}
    </button>
  );
}
function RefInput({ id, value }: { id: string; value: string }) {
  return (
    <div className="flex h-[22px] flex-1 border border-[#abadb3] bg-white">
      <input id={id} defaultValue={value} className="w-0 min-w-0 flex-1 pl-[3px] outline-none" />
      <button type="button" aria-label="Select range" className="flex w-[21px] items-center justify-center border-2 border-[#c4c4c8] bg-white">
        <svg viewBox="0 0 10 11" className="h-[11px] w-[10px]">
          <path d="M5 0l4 4.500H6.200V8.500H3.800V4.500H1zM1 9.700h8V11H1z" fill="#000" />
        </svg>
      </button>
    </div>
  );
}
function Radio({ id, checked, children, cls }: Kids & { id: string; checked?: boolean; cls: string }) {
  return (
    <div className={`flex items-center gap-[5px] pt-[2px] ${cls}`}>
      <input
        id={id}
        type="radio"
        name="goal"
        defaultChecked={checked}
        className="size-[13px] appearance-none rounded-full border border-[#333] bg-white checked:border-[#333] checked:bg-[#333] checked:shadow-[inset_0_0_0_2px_#fff]"
      />
      <label htmlFor={id}>{children}</label>
    </div>
  );
}
const Chev = ({ up }: { up?: boolean }) => (
  <svg viewBox="0 0 8 6" className="h-[6px] w-2" fill="none" stroke="#bcbcbc" strokeWidth={1.800}>
    <path d={up ? "M.5 5L4 1.500 7.500 5" : "M.5 1L4 4.500 7.500 1"} />
  </svg>
);

function SolverDialog() {
  return (
    <div
      role="dialog"
      aria-label="Solver Parameters"
      className="absolute top-[200px] left-[1003px] z-20 flex h-[599px] w-[570px] flex-col border border-[#1979ca] bg-[#f0f0f0] text-[11px] leading-[13px] text-black shadow-[0_4px_18px_rgba(0,0,0,0.35)]"
    >
      <div className="flex h-[30px] items-center justify-between bg-white pr-[9px] pb-px pl-2">
        <span>Solver Parameters</span>
        <button type="button" aria-label="Close dialog">
          <svg viewBox="0 0 12 12" className="size-3" stroke="#111" strokeWidth={1.200}>
            <path d="M1 1l10 10M11 1L1 11" />
          </svg>
        </button>
      </div>
      <div className="mx-[14px] mt-[12px] h-[504px] shrink-0 border border-[#dcdcdc] px-[13px] pt-[14px]">
        <div className="flex items-center">
          <label htmlFor="objective" className="w-[224px] pb-[2px] pl-[2px]">
            Se<U>t</U> Objective:
          </label>
          <RefInput id="objective" value="$B$10" />
        </div>
        <div className="mt-[13px] flex h-[22px] items-center">
          <span className="w-[53px] pt-[2px] pl-[2px]">To:</span>
          <Radio id="max" cls="w-[85px]"><U>M</U>ax</Radio>
          <Radio id="min" cls="w-[77px]" checked>Mi<U>n</U></Radio>
          <Radio id="val" cls="w-[114px]"><U>V</U>alue Of:</Radio>
          <input aria-label="Value" disabled defaultValue="0" className="h-[22px] w-0 min-w-0 flex-1 border-[3px] border-white bg-[#f0f0f0] text-[#838383] outline-1 outline-[#abadb3] -outline-offset-1" />
        </div>
        <label htmlFor="cells" className="mt-[17px] block pl-[2px]">
          <U>B</U>y Changing Variable Cells:
        </label>
        <div className="mt-[4px] flex">
          <RefInput id="cells" value="$B$13:$E$15" />
        </div>
        <div className="mt-[16px] pl-[2px]">
          S<U>u</U>bject to the Constraints:
        </div>
        <div className="-mr-[6px] flex items-start">
          <div className="mt-[5px] flex h-[173px] w-[372px] border border-[#828790] bg-white p-px">
            <div className="ml-auto flex w-[16px] flex-col items-center justify-between bg-[#f0f0f0] py-[7px]">
              <Chev up />
              <Chev />
            </div>
          </div>
          <div className="mt-[5px] ml-auto flex w-[139px] flex-col">
            <Btn cls="border border-[#adadad]"><U>A</U>dd</Btn>
            <Btn cls="mt-2 border border-[#adadad]"><U>C</U>hange</Btn>
            <Btn cls="mt-2 border border-[#adadad]"><U>D</U>elete</Btn>
            <Btn cls="mt-4 border border-[#adadad]"><U>R</U>eset All</Btn>
            <Btn cls="mt-2 border border-[#adadad]"><U>L</U>oad/Save</Btn>
          </div>
        </div>
        <div className="mt-[4px] flex items-center gap-[4px] pl-[5px]">
          <input id="nonneg" type="checkbox" className="size-[13px] appearance-none border border-[#333] bg-white" />
          <label htmlFor="nonneg">
            Ma<U>k</U>e Unconstrained Variables Non-Negative
          </label>
        </div>
        <div className="-mr-[6px] mt-[11px] flex items-start">
          <label htmlFor="method" className="mt-[4px] w-[105px] shrink-0 pl-[2px]">
            S<U>e</U>lect a Solving
            <br />
            Method:
          </label>
          <div className="relative w-[288px]">
            <select id="method" className="block h-[22px] w-full appearance-none border border-[#abadb3] bg-white pl-[3px]">
              <option>GRG Nonlinear</option>
            </select>
            <span className="pointer-events-none absolute top-0 right-0 flex h-[22px] w-[18px] items-center justify-center border-2 border-[#b8b8bc] bg-[#e9e9e9]">
              <svg viewBox="0 0 8 6" className="h-[6px] w-2" fill="none" stroke="#555" strokeWidth={1.200}>
                <path d="M.5 1L4 4.500 7.500 1" />
              </svg>
            </span>
          </div>
          <Btn cls="mt-px ml-auto w-[118px] border border-[#adadad]">O<U>p</U>tions</Btn>
        </div>
        <fieldset className="mt-[19px] h-[77px] border border-[#dcdcdc] pt-[3px] pl-[9px]">
          <div>Solving Method</div>
          <p className="mt-[8px] whitespace-nowrap">
            Select the GRG Nonlinear engine for Solver Problems that are smooth nonlinear. Select the LP
            <br />
            Simplex engine for linear Solver Problems, and select the Evolutionary engine for Solver
            <br />
            problems that are non-smooth.
          </p>
        </fieldset>
      </div>
      <div className="mx-[15px] mt-[10px] flex">
        <Btn cls="w-[111px] border border-[#adadad]"><U>H</U>elp</Btn>
        <Btn cls="ml-auto w-[111px] border-2 border-[#0078d7]"><U>S</U>olve</Btn>
        <Btn cls="ml-[15px] w-[111px] border border-[#adadad]">Cl<U>o</U>se</Btn>
      </div>
    </div>
  );
}

/* ---------- Hand-drawn marks ---------- */

function smooth(p: Pt[]): string {
  let d = `M${p[0][0]} ${p[0][1]}`;
  for (let i = 0; i < p.length - 1; i++) {
    const a = p[i - 1] ?? p[i];
    const b = p[i];
    const c = p[i + 1];
    const e = p[i + 2] ?? c;
    d += `C${b[0] + (c[0] - a[0]) / 6} ${b[1] + (c[1] - a[1]) / 6} ${c[0] - (e[0] - b[0]) / 6} ${c[1] - (e[1] - b[1]) / 6} ${c[0]} ${c[1]}`;
  }
  return d;
}

const MARKS: Pt[][] = [
  [[1216, 262], [1180, 261], [1100, 256], [1050, 251], [985, 246], [920, 244], [800, 244], [690, 244], [642, 250], [600, 262], [568, 275], [536, 290], [475, 325], [440, 341], [410, 358], [370, 380], [320, 403], [285, 415], [243, 424]],
  [[267, 380], [252, 398], [237, 420]],
  [[267, 380], [256, 402], [241, 422]],
  [[237, 420], [238, 429], [245, 438], [255, 444], [270, 447], [290, 448], [315, 448]],
  [[919, 364], [914, 360], [906, 360], [880, 360], [820, 358], [715, 358], [690, 360], [640, 366], [570, 378], [540, 388], [505, 405], [475, 422], [440, 440], [420, 449]],
  [[414, 417], [411, 435], [409, 448], [414, 452], [422, 448]],
  [[414, 417], [416, 440], [414, 448]],
  [[420, 448], [430, 450], [450, 451], [484, 449]],
  [[1227, 263], [1240, 251], [1253, 240], [1267, 230], [1282, 223], [1297, 221], [1312, 223], [1325, 228], [1336, 235], [1344, 246], [1349, 260], [1351, 275], [1348, 291], [1340, 303], [1327, 312], [1312, 317], [1297, 318], [1260, 315], [1247, 311], [1236, 304], [1229, 294], [1225, 284], [1222, 267]],
  [[1167, 318], [1200, 318], [1222, 320]],
  [[1136, 363], [1133, 347], [1120, 327], [1097, 312], [1063, 303], [1030, 301], [997, 305], [979, 314], [966, 328], [960, 343], [964, 361], [973, 375], [987, 389], [1003, 397], [1020, 403], [1053, 410], [1087, 412], [1117, 407], [1137, 395], [1149, 384]],
  [[1138, 640], [1222, 640]],
  [[1409, 707], [1415, 720], [1418, 742], [1413, 770], [1396, 800], [1372, 821], [1358, 829], [1340, 832], [1315, 829], [1288, 819], [1274, 808], [1264, 793], [1257, 775], [1255, 760], [1259, 742], [1269, 728], [1282, 719], [1298, 714], [1324, 712], [1360, 715], [1387, 719], [1401, 722], [1405, 726]],
];

function Marks() {
  return (
    <svg viewBox="0 0 1928 1056" className="pointer-events-none absolute top-0 left-0 z-30 h-[1056px] w-[1928px]" fill="none" stroke="#f74545" strokeWidth={9} strokeLinecap="round" strokeLinejoin="round">
      {MARKS.map((m, i) => (
        <path key={i} d={smooth(m)} />
      ))}
    </svg>
  );
}

export default function App() {
  return (
    <div className="relative flex h-screen w-full flex-col overflow-hidden bg-black font-['Open_Sans','Noto_Sans',sans-serif]">
      <div className="h-2 shrink-0" />
      <div className="flex min-h-0 flex-1">
        <aside className="flex w-2 shrink-0 flex-col overflow-hidden">
          <div className="h-[317px] border-r-2 border-[#444] bg-[#2b2b2b]" />
          <div className="flex h-[56px] items-center justify-end bg-[#0a0c16] pr-[5px] text-[11px] text-white">8</div>
        </aside>
        <main className="flex min-w-0 flex-1 flex-col">
          <div className="bg-[#217346]">
            <TitleBar />
            <Tabs />
          </div>
          <Ribbon />
          <FormulaBar />
          <Sheet />
          <SheetTabs />
          <StatusBar />
        </main>
      </div>
      <div className="flex h-2 shrink-0 overflow-hidden bg-[#050812]">
        <div className="ml-[56px] h-2 w-[344px] bg-[#f3f3f3]" />
        <time className="mr-[62px] ml-auto pt-[2px] text-[11px] leading-[13px] text-white">1:17 AM</time>
      </div>
      <div className="pointer-events-none absolute right-[86px] bottom-[56px] z-10 w-[235px] text-[#8c8c8c]/60">
        <div className="text-[19px] leading-[26px] whitespace-nowrap">Activate Windows</div>
        <div className="text-[14px] leading-[20px] whitespace-nowrap">Go to Settings to activate Windows.</div>
      </div>
      <SolverDialog />
      <Marks />
    </div>
  );
}
